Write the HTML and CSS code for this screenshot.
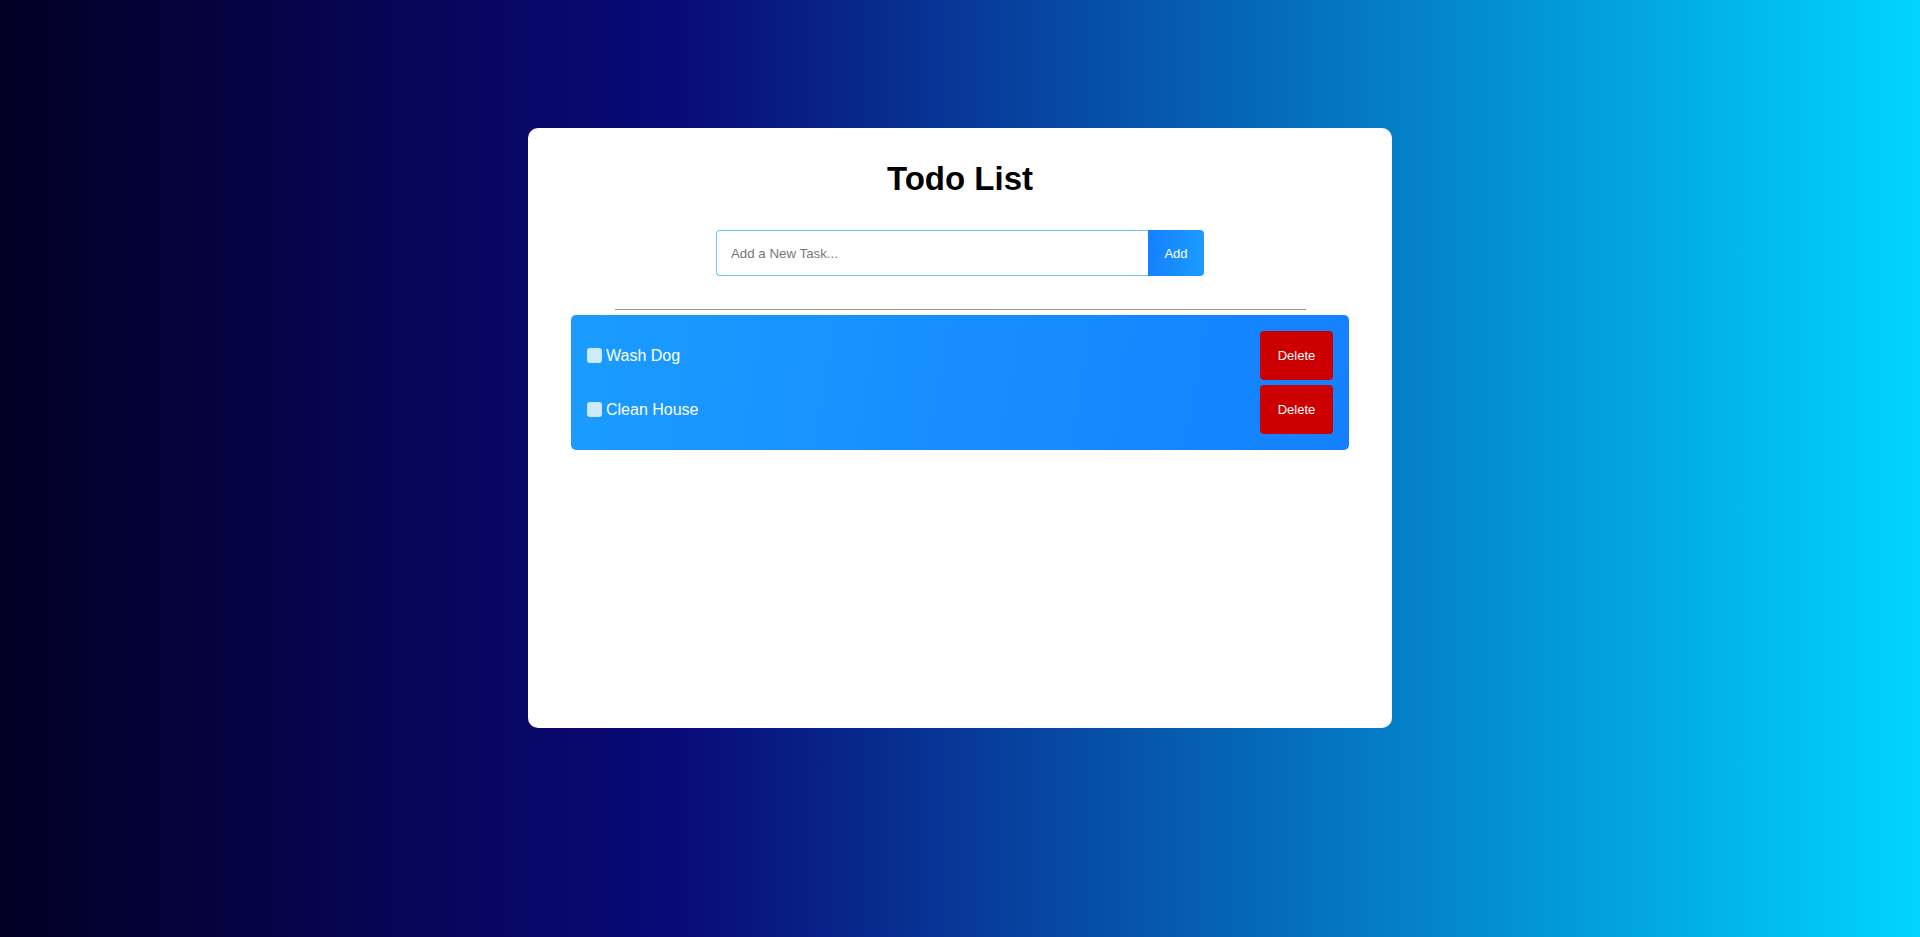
FILE: index.html
```html
<!DOCTYPE html>
<html lang="en">
<head>
<meta charset="UTF-8">
<title>Todo List</title>
<link rel="stylesheet" href="styles.css">
</head>
<body>
  <div class="card">
    <h1 class="title">Todo List</h1>
    <form class="add-form">
      <input class="task-input" type="text" placeholder="Add a New Task..." autofocus>
      <button class="add-btn" type="button">Add</button>
    </form>
    <div class="divider"></div>
    <ul class="task-list">
      <li class="task">
        <span class="check"></span>
        <span class="task-text">Wash Dog</span>
        <button class="delete-btn" type="button">Delete</button>
      </li>
      <li class="task">
        <span class="check"></span>
        <span class="task-text">Clean House</span>
        <button class="delete-btn" type="button">Delete</button>
      </li>
    </ul>
  </div>
</body>
</html>
```
FILE: styles.css
```css
html, body {
  margin: 0;
  padding: 0;
  height: 100%;
}
body {
  background: linear-gradient(90deg, rgb(2, 0, 36) 0%, rgb(9, 9, 121) 35%, rgb(0, 212, 255) 100%);
  font-family: "Liberation Sans", Arial, sans-serif;
  padding-top: 128px;
  box-sizing: border-box;
}
.card {
  width: 864px;
  height: 600px;
  margin: 0 auto;
  background: #fff;
  border-radius: 10px;
  box-sizing: border-box;
  padding-top: 32px;
  display: flex;
  flex-direction: column;
  align-items: center;
}
.title {
  margin: 0;
  font-size: 33px;
  font-weight: bold;
  line-height: 38px;
  color: #000;
}
.add-form {
  display: flex;
  margin: 32px 0 0;
}
.task-input {
  width: 432px;
  height: 46px;
  box-sizing: border-box;
  border: 1px solid #66c8ff;
  border-right: none;
  border-radius: 4px 0 0 4px;
  padding: 0 14px;
  font-family: "Liberation Sans", Arial, sans-serif;
  font-size: 13.3px;
  outline: none;
  caret-color: #000;
}
.task-input::placeholder {
  color: #777;
}
.add-btn {
  width: 56px;
  height: 46px;
  border: none;
  border-radius: 0 4px 4px 0;
  background: linear-gradient(90deg, #1480ff, #1a9cff);
  color: #fff;
  font-family: "Liberation Sans", Arial, sans-serif;
  font-size: 13px;
  padding: 0;
}
.divider {
  width: 691px;
  height: 1px;
  background: #999;
  margin-top: 33px;
}
.task-list {
  list-style: none;
  margin: 5px 0 0;
  width: 778px;
  box-sizing: border-box;
  padding: 16px;
  border-radius: 5px;
  background: linear-gradient(100deg, #1a9cff 0%, #1480ff 100%);
  display: flex;
  flex-direction: column;
  gap: 5px;
}
.task {
  display: flex;
  align-items: center;
  color: #fff;
  font-size: 16px;
}
.check {
  width: 15px;
  height: 15px;
  border-radius: 3px;
  background: #cdeafe;
  margin-right: 4px;
  flex-shrink: 0;
}
.task-text {
  flex: 1;
}
.delete-btn {
  width: 73px;
  height: 49px;
  border: none;
  border-radius: 4px;
  background: #cc0000;
  color: #fff;
  font-family: "Liberation Sans", Arial, sans-serif;
  font-size: 13px;
  padding: 0;
}
```
